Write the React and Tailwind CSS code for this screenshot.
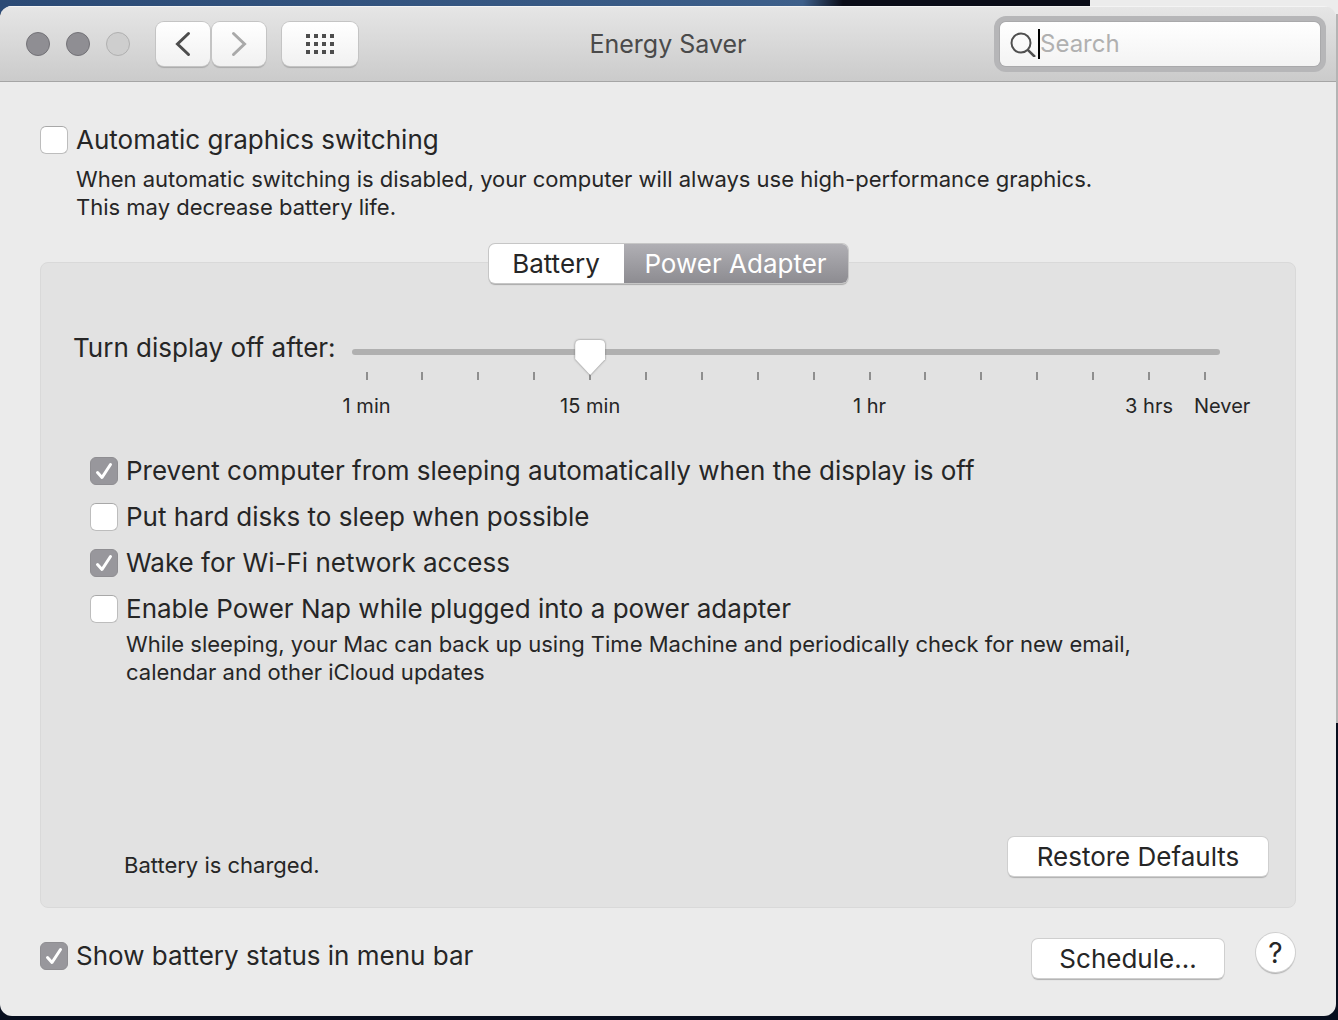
import React, { useState } from 'react'

const STEPS = 16

const LABELS = {
  0: '1 min',
  4: '15 min',
  9: '1 hr',
  14: '3 hrs',
  15: 'Never',
}

const Checkbox = ({ id, label, checked, onChange }) => {
  return (
    <div className="flex items-center gap-2">
      <span className="grid size-7 shrink-0 place-items-center">
        <input
          id={id}
          type="checkbox"
          checked={checked}
          onChange={onChange}
          className="col-start-1 row-start-1 size-7 appearance-none rounded-md border border-[#bdbdbd] border-t-[#a8a8a8] bg-white checked:border-[#8f8e92] checked:bg-[#98979c]"
        />
        {checked && (
          <svg viewBox="0 0 28 28" className="pointer-events-none col-start-1 row-start-1 size-7" fill="none">
            <path d="M7.5 15.5 12 20.5 20.5 7.5" stroke="#fff" strokeWidth="3" strokeLinecap="round" strokeLinejoin="round" />
          </svg>
        )}
      </span>
      <label htmlFor={id} className="text-[26px] leading-8">{label}</label>
    </div>
  )
}

const Toolbar = () => {
  const button = 'grid h-11 place-items-center rounded-lg bg-linear-to-b from-white to-[#f1f1f1] shadow-[0_0_0_1px_#c4c4c4,0_2px_1px_#a9a9a9]'

  return (
    <header className="grid grid-cols-[1fr_auto_1fr] items-center border-b border-[#a5a5a5] bg-linear-to-b from-[#e6e6e6] to-[#cbcbcb] px-4 pt-4 pb-[15px] shadow-[inset_0_1px_0_#f4f4f4]">
      <div className="flex items-center gap-6 pl-2.5">
        <div className="flex gap-4">
          <button aria-label="Close" className="size-6 rounded-full border border-[#737277] bg-[#8f8e93]" />
          <button aria-label="Minimize" className="size-6 rounded-full border border-[#737277] bg-[#8f8e93]" />
          <button aria-label="Zoom" disabled className="size-6 rounded-full border border-[#b0b0b0] bg-[#cecece]" />
        </div>
        <div className="flex gap-4 pl-0.5">
          <div className="flex gap-0.5">
            <button aria-label="Back" className={`${button} w-[54px]`}>
              <svg viewBox="0 0 16 26" className="h-[26px] w-4" fill="none" stroke="#4d4d4d" strokeWidth="3" strokeLinecap="round">
                <path d="M13.5 2.5 2.5 13 13.5 23.5" />
              </svg>
            </button>
            <button aria-label="Forward" disabled className={`${button} w-[54px]`}>
              <svg viewBox="0 0 16 26" className="h-[26px] w-4" fill="none" stroke="#a9a9a9" strokeWidth="3" strokeLinecap="round">
                <path d="M2.5 2.5 13.5 13 2.5 23.5" />
              </svg>
            </button>
          </div>
          <button aria-label="Show all" className={`${button} w-[76px]`}>
            <svg viewBox="0 0 28 20" className="h-5 w-7" fill="#4d4d4d">
              {[0, 8, 16].map((y) =>
                [0, 8, 16, 24].map((x) => <rect key={`${x}-${y}`} x={x} y={y} width="4" height="4" />)
              )}
            </svg>
          </button>
        </div>
      </div>

      <h1 className="text-[25px] leading-8 text-[#4a4a4a]">Energy Saver</h1>

      <div className="flex h-11 w-80 items-center justify-self-end rounded-md bg-linear-to-b from-white to-[#f3f3f3] pl-2.5 shadow-[0_0_0_1px_#a9a9ab,0_0_0_6px_#b6b6b8]">
        <svg viewBox="0 0 26 26" className="size-[26px] shrink-0" fill="none" stroke="#4f4f4f" strokeWidth="2">
          <circle cx="11" cy="12" r="9.5" />
          <path d="M17.8 18.8 25 26" strokeWidth="2.5" />
        </svg>
        <span className="ml-0.5 h-[30px] w-0.5 shrink-0 bg-black" />
        <input
          type="search"
          aria-label="Search"
          placeholder="Search"
          className="w-full min-w-0 bg-transparent text-2xl outline-none placeholder:text-[#b0b0b0]"
        />
      </div>
    </header>
  )
}

const DisplaySlider = () => {
  const [value, setValue] = useState(4)

  return (
    <div className="flex items-start gap-4 pr-[43px]">
      <label htmlFor="display-off" className="shrink-0 text-[26px] leading-8">Turn display off after:</label>
      <div className="grid flex-1 pt-2">
        <div className="col-start-1 row-start-1 mt-[9px] h-1.5 rounded-full bg-[#b0b0b0]" />
        <div className="col-start-1 row-start-1 flex justify-between px-3.5 pt-8">
          {Array.from({ length: STEPS }, (_, i) => (
            <div key={i} className="flex w-0.5 flex-col items-center gap-3">
              <span className="h-2 w-0.5 shrink-0 bg-[#8e8e8e]" />
              {LABELS[i] && (
                <span className={`text-xl leading-7 whitespace-nowrap ${i === STEPS - 1 ? '-ml-2.5 self-start' : ''}`}>
                  {LABELS[i]}
                </span>
              )}
            </div>
          ))}
        </div>
        <input
          id="display-off"
          type="range"
          min="0"
          max={STEPS - 1}
          value={value}
          onChange={(e) => setValue(Number(e.target.value))}
          className="z-10 col-start-1 row-start-1 h-9 w-full appearance-none bg-transparent drop-shadow-[0_0_1px_#777] [&::-webkit-slider-thumb]:h-9 [&::-webkit-slider-thumb]:w-[30px] [&::-webkit-slider-thumb]:appearance-none [&::-webkit-slider-thumb]:bg-white [&::-webkit-slider-thumb]:[clip-path:path('M5_0H25Q30_0_30_5V19L15_35L0_19V5Q0_0_5_0Z')]"
        />
      </div>
    </div>
  )
}

const App = () => {
  const [tab, setTab] = useState('adapter')
  const [options, setOptions] = useState({
    graphics: false,
    prevent: true,
    disks: false,
    wake: true,
    nap: false,
    menubar: true,
  })

  const bind = (id) => ({
    id,
    checked: options[id],
    onChange: () => setOptions({ ...options, [id]: !options[id] }),
  })

  const push = 'rounded-md bg-white text-[26px] shadow-[0_0_0_1px_#cfcfcf,0_2px_1px_#b0b0b0]'
  const active = 'bg-linear-to-b from-[#b0afb4] to-[#8d8c91] text-white'

  return (
    <div className="flex min-h-screen flex-col pt-1.5 pr-0.5 pb-1 font-['Inter',sans-serif] text-[#262626] [background:linear-gradient(#b4b4b4,#b4b4b4)_100%_14px/2px_709px_no-repeat,linear-gradient(#ececec,#ececec)_100%_0/248px_20px_no-repeat,linear-gradient(90deg,#2b4a75,#3d5f8a_60%,#0a0c18_63%)_0_0/100%_14px_no-repeat,#070e1e]">
      <main className="flex flex-1 flex-col overflow-hidden rounded-xl bg-[#ebebeb]">
        <Toolbar />

        <div className="flex flex-1 flex-col px-10 pt-[42px] pb-[38px]">
          <Checkbox {...bind('graphics')} label="Automatic graphics switching" />
          <p className="mt-[9px] pl-9 text-[22px] leading-7">
            When automatic switching is disabled, your computer will always use high-performance graphics.
            <br />
            This may decrease battery life.
          </p>

          <div role="tablist" className="z-10 mt-[23px] flex h-[39px] self-center overflow-hidden rounded-md bg-white text-[26px] shadow-[0_0_0_1px_#c6c6c6,0_2px_1px_#aaa]">
            <button role="tab" aria-selected={tab === 'battery'} onClick={() => setTab('battery')} className={`w-[135px] ${tab === 'battery' ? active : ''}`}>
              Battery
            </button>
            <button role="tab" aria-selected={tab === 'adapter'} onClick={() => setTab('adapter')} className={`w-56 ${tab === 'adapter' ? active : ''}`}>
              Power Adapter
            </button>
          </div>

          <section className="-mt-[21px] flex flex-1 flex-col rounded-lg border border-[#d9d9d9] bg-[#e2e2e2] px-8 pt-[69px]">
            <DisplaySlider />
            <div className="mt-[35px] flex flex-col gap-3.5 pl-[17px]">
              <Checkbox {...bind('prevent')} label="Prevent computer from sleeping automatically when the display is off" />
              <Checkbox {...bind('disks')} label="Put hard disks to sleep when possible" />
              <Checkbox {...bind('wake')} label="Wake for Wi-Fi network access" />
              <Checkbox {...bind('nap')} label="Enable Power Nap while plugged into a power adapter" />
            </div>
            <p className="mt-[5px] pl-[53px] text-[22px] leading-7">
              While sleeping, your Mac can back up using Time Machine and periodically check for new email,
              <br />
              calendar and other iCloud updates
            </p>
            <div className="-mr-[5px] mt-auto flex items-center justify-between pb-7 pl-[51px]">
              <p className="pt-[18px] text-[22px] leading-7">Battery is charged.</p>
              <button className={`${push} h-[39px] w-[260px]`}>Restore Defaults</button>
            </div>
          </section>

          <footer className="mt-[25px] flex items-center justify-between pr-px">
            <Checkbox {...bind('menubar')} label="Show battery status in menu bar" />
            <div className="flex items-start gap-8">
              <button className={`${push} mt-1.5 h-[39px] w-48`}>Schedule...</button>
              <button aria-label="Help" className="size-[39px] rounded-full bg-white text-[28px] leading-none shadow-[0_0_0_1px_#cfcfcf,0_2px_1px_#b0b0b0]">?</button>
            </div>
          </footer>
        </div>
      </main>
    </div>
  )
}

export default App
